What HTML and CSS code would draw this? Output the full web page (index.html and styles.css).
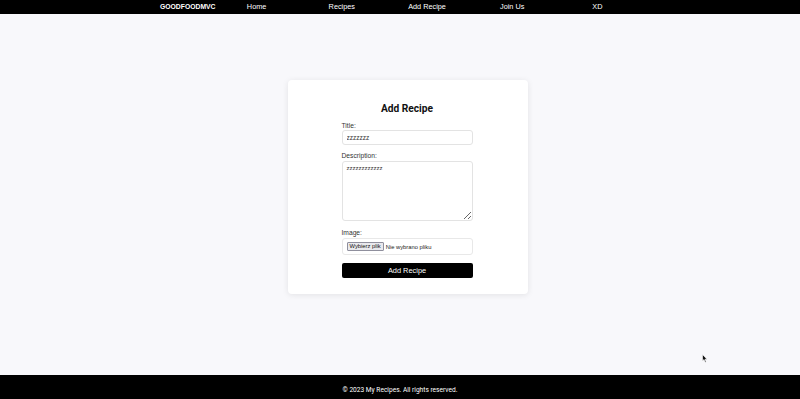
FILE: index.html
```html
<!DOCTYPE html>
<html lang="pl">
<head>
    <meta charset="UTF-8">
    <meta name="viewport" content="width=device-width, initial-scale=1.0">
    <title>Add Recipe - GoodFoodMVC</title>
    <link rel="stylesheet" href="styles.css">
</head>
<body>
    <header class="navbar">
        <div class="nav-inner">
            <a class="brand" href="#">GOODFOODMVC</a>
            <ul class="nav-links">
                <li><a href="#">Home</a></li>
                <li><a href="#">Recipes</a></li>
                <li><a href="#">Add Recipe</a></li>
                <li><a href="#">Join Us</a></li>
                <li><a href="#">XD</a></li>
            </ul>
        </div>
    </header>

    <main class="page">
        <section class="card">
            <h2>Add Recipe</h2>
            <form class="recipe-form">
                <div class="form-group">
                    <label for="title">Title:</label>
                    <input type="text" id="title" value="zzzzzzz">
                </div>
                <div class="form-group">
                    <label for="description">Description:</label>
                    <textarea id="description">zzzzzzzzzzzz</textarea>
                </div>
                <div class="form-group">
                    <label>Image:</label>
                    <div class="file-box">
                        <span class="file-btn">Wybierz plik</span>
                        <span class="file-name">Nie wybrano pliku</span>
                    </div>
                </div>
                <button type="button" class="submit-btn">Add Recipe</button>
            </form>
        </section>

        <!-- mouse pointer caught in the screenshot -->
        <svg class="cursor" width="6" height="9" viewBox="0 0 6 9">
            <path d="M0.5 0.5 L0.5 7 L2 5.6 L3.2 8.3 L4.2 7.9 L3 5.2 L5 5.2 Z" fill="#111" stroke="#fff" stroke-width="0.6"/>
        </svg>
    </main>

    <footer class="footer">
        <p>&copy; 2023 My Recipes. All rights reserved.</p>
    </footer>
</body>
</html>
```

FILE: styles.css
```css
* {
    margin: 0;
    padding: 0;
    box-sizing: border-box;
}

html, body {
    height: 100%;
}

body {
    font-family: 'Liberation Sans', Arial, sans-serif;
    color: #222;
    background-color: #f8f8fb;
    display: flex;
    flex-direction: column;
    min-height: 399px;
}

/* Navbar */
.navbar {
    background-color: #000;
    height: 14px;
    flex-shrink: 0;
}

.nav-inner {
    width: 480px;
    height: 100%;
    margin: 0 auto;
    display: flex;
    align-items: center;
    font-size: 7.3px;
    line-height: 1;
}

.brand {
    color: #fff;
    font-weight: bold;
    font-size: 6.8px;
    text-decoration: none;
    width: 54px;
    white-space: nowrap;
}

.nav-links {
    list-style: none;
    display: flex;
    flex: 1;
}

.nav-links li {
    flex: 1;
    text-align: center;
}

.nav-links a {
    color: #fff;
    text-decoration: none;
}

/* Main */
.page {
    flex: 1;
    position: relative;
    padding: 66px 0 0 15px;
}

.card {
    width: 240px;
    margin: 0 auto;
    background-color: #fff;
    border-radius: 4px;
    box-shadow: 0 1px 6px rgba(0, 0, 0, 0.09);
    padding: 23px 55px 16px 54px;
}

.card h2 {
    font-family: Roboto, 'Liberation Sans', sans-serif;
    font-size: 10.2px;
    line-height: 12px;
    text-align: center;
    color: #111;
    margin-bottom: 7px;
}

.form-group {
    margin-bottom: 8px;
}

.form-group:first-child {
    margin-bottom: 7px;
}

.form-group label {
    display: block;
    font-size: 6.7px;
    line-height: 8px;
    color: #333;
    margin-bottom: 1px;
}

.form-group:first-child label {
    margin-bottom: 0;
}

.form-group input,
.form-group textarea {
    display: block;
    width: 100%;
    border: 1px solid #e3e3e3;
    border-radius: 3px;
    background: #fff;
    font-family: 'Liberation Sans', Arial, sans-serif;
    color: #333;
    outline: none;
}

.form-group input {
    height: 15px;
    font-size: 6.5px;
    padding: 0 4px;
}

.form-group textarea {
    height: 60px;
    font-size: 6px;
    padding: 3px 4px;
    resize: vertical;
}

.file-box {
    height: 17px;
    border: 1px solid #e8e8e8;
    border-radius: 3px;
    display: flex;
    align-items: center;
    padding: 0 4px;
    gap: 2px;
    font-size: 5.8px;
}

.file-btn {
    background-color: #e9e9ed;
    border: 1px solid #8f8f9d;
    border-radius: 1px;
    padding: 0 2px;
    height: 9px;
    line-height: 7px;
    color: #111;
}

.file-name {
    color: #222;
}

.submit-btn {
    display: block;
    width: 100%;
    height: 15px;
    background-color: #000;
    color: #fff;
    border: none;
    border-radius: 2px;
    font-family: 'Liberation Sans', Arial, sans-serif;
    font-size: 7.4px;
    cursor: pointer;
}

.cursor {
    position: absolute;
    left: 702px;
    top: 340px;
}

/* Footer */
.footer {
    background-color: #000;
    color: #fff;
    height: 24px;
    flex-shrink: 0;
    display: flex;
    align-items: center;
    justify-content: center;
    font-family: Roboto, 'Liberation Sans', sans-serif;
    font-size: 6.6px;
    padding-top: 6px;
}
```
